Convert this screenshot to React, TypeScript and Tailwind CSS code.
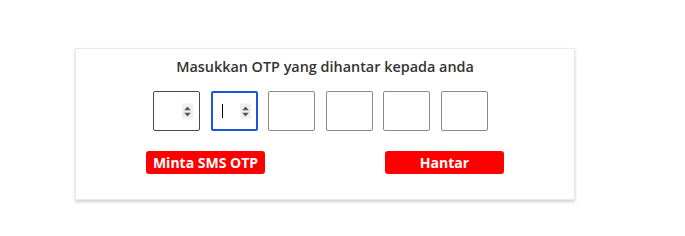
import { useState } from 'react';

function Spinner() {
  return (
    <span className="absolute right-[7px] top-1/2 -translate-y-1/2 flex h-[15px] w-[11px] flex-col items-center justify-center gap-[2px] bg-[#efefef]">
      <svg width="7" height="4" viewBox="0 0 7 4"><path d="M3.5 0L7 4H0z" fill="#555" /></svg>
      <svg width="7" height="4" viewBox="0 0 7 4"><path d="M0 0h7L3.5 4z" fill="#555" /></svg>
    </span>
  );
}

export default function App() {
  const [digits, setDigits] = useState<string[]>(['', '', '', '', '', '']);

  const setDigit = (i: number, v: string) => {
    const next = [...digits];
    next[i] = v.slice(-1);
    setDigits(next);
  };

  return (
    <div className="min-h-[236px] w-[685px] bg-white pt-[48px] pl-[75px]" style={{ fontFamily: '"Open Sans", "Noto Sans", sans-serif' }}>
      <div className="h-[152px] w-[500px] border border-[#e8e8e8] bg-white shadow-[0_2px_3px_rgba(0,0,0,0.18)]">
        <p className="mt-[8px] text-center text-[14.4px] leading-[20px] font-semibold text-[#333333]">
          Masukkan OTP yang dihantar kepada anda
        </p>

        <div className="mt-[14px] flex gap-[10.5px] pl-[77px]">
          {digits.map((d, i) => (
            <div key={i} className="relative h-[40px] w-[47px]">
              <input
                type="text"
                inputMode="numeric"
                value={d}
                onChange={(e) => setDigit(i, e.target.value)}
                className={
                  i === 1
                    ? 'h-full w-full rounded-[2px] border-2 border-[#1a56d6] bg-white px-2 outline-none'
                    : i === 0
                      ? 'h-full w-full rounded-[2px] border border-[#4a4a4a] bg-white px-2 outline-none'
                      : 'h-full w-full rounded-[2px] border border-[#8a8a8a] bg-white px-2 outline-none'
                }
              />
              {i === 1 && <span className="absolute left-[11px] top-[13px] h-[14px] w-[1px] bg-black" />}
              {i < 2 && <Spinner />}
            </div>
          ))}
        </div>

        <div className="mx-auto mt-[20px] flex w-[358px] justify-between">
          <button className="h-[23px] w-[119px] rounded-[3px] bg-[#ff0000] text-[14px] font-bold leading-none text-white">
            Minta SMS OTP
          </button>
          <button className="h-[23px] w-[119px] rounded-[3px] bg-[#ff0000] text-[14px] font-bold leading-none text-white">
            Hantar
          </button>
        </div>
      </div>
    </div>
  );
}
